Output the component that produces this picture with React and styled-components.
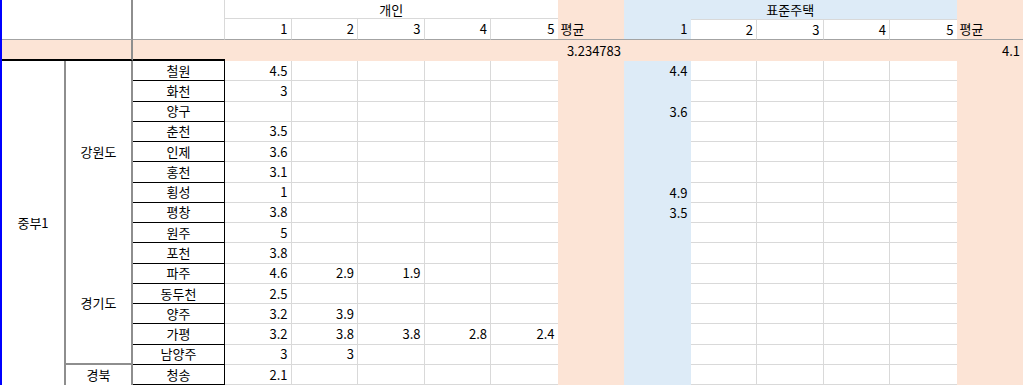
import React from "react";
import styled, { createGlobalStyle } from "styled-components";

const GlobalStyle = createGlobalStyle`
  body {
    margin: 0;
    background: #ffffff;
    overflow: hidden;
    font-family: "Noto Sans CJK KR", "Noto Sans", sans-serif;
  }
`;

const fills = {
  white: "#ffffff",
  peach: "#fce4d6",
  blue: "#ddebf7",
};

const GRID = "1px solid #d9d9d9";
const HEAD = "1px solid #a3a3a3";
const HEAVY = "2px solid #8e8e8e";
const BLACK = "1px solid #000000";

const Sheet = styled.div`
  display: grid;
  grid-template-columns: 64px 67px 92px repeat(12, 66.5px);
  grid-template-rows: 19px 21px 21px repeat(16, 20.27px);
  width: 1024px;
  height: 385px;
  overflow: hidden;
  border-left: 2px solid #0000ff;
  box-sizing: border-box;
  font-size: 13px;
  color: #000000;
`;

const Cell = styled.div`
  box-sizing: border-box;
  display: flex;
  align-items: center;
  justify-content: ${(p) =>
    p.$align === "left" ? "flex-start" : p.$align === "center" ? "center" : "flex-end"};
  padding: 0 3px 1px;
  min-width: 0;
  white-space: nowrap;
  overflow: hidden;
  line-height: 1;
  background: ${(p) => fills[p.$fill || "white"]};
  border-right: ${(p) => p.$r || "none"};
  border-bottom: ${(p) => p.$b || "none"};
  border-top: ${(p) => p.$t || "none"};
  grid-column: span ${(p) => p.$cs || 1};
  grid-row: span ${(p) => p.$rs || 1};
`;

const TitleCell = styled(Cell)`
  align-items: flex-start;
  padding-top: 3px;
`;

const GroupCell = styled(Cell)`
  justify-content: center;
`;

const CityCell = styled(Cell)`
  justify-content: center;
  border-right: ${BLACK};
  border-bottom: ${BLACK};
`;

const rows = [
  ["철원", ["4.5"], ["4.4"]],
  ["화천", ["3"], []],
  ["양구", [], ["3.6"]],
  ["춘천", ["3.5"], []],
  ["인제", ["3.6"], []],
  ["홍천", ["3.1"], []],
  ["횡성", ["1"], ["4.9"]],
  ["평창", ["3.8"], ["3.5"]],
  ["원주", ["5"], []],
  ["포천", ["3.8"], []],
  ["파주", ["4.6", "2.9", "1.9"], []],
  ["동두천", ["2.5"], []],
  ["양주", ["3.2", "3.9"], []],
  ["가평", ["3.2", "3.8", "3.8", "2.8", "2.4"], []],
  ["남양주", ["3", "3"], []],
  ["청송", ["2.1"], []],
];

const provinces = {
  0: { name: "강원도", span: 9 },
  9: { name: "경기도", span: 6, line: true },
  15: { name: "경북", span: 1 },
};

const idx = [0, 1, 2, 3, 4];

function Block({ values, fill }) {
  // 5 value columns; white ones carry gridlines, filled ones hide them
  return idx.map((i) => {
    const isFilled = fill && i === 0;
    return (
      <Cell
        key={i}
        $fill={isFilled ? fill : "white"}
        $r={isFilled || i === 4 ? "none" : GRID}
        $b={isFilled ? "none" : GRID}
      >
        {values[i] || ""}
      </Cell>
    );
  });
}

export default function App() {
  return (
    <>
      <GlobalStyle />
      <Sheet>
        {/* header row 1 */}
        <Cell $cs={2} $rs={2} $r={HEAVY} $b={HEAD} />
        <Cell $rs={2} $r={GRID} $b={HEAD} />
        <TitleCell $cs={5} $align="center" $b={GRID}>
          개인
        </TitleCell>
        <Cell $fill="peach" />
        <TitleCell $cs={5} $align="center" $fill="blue">
          표준주택
        </TitleCell>
        <Cell $fill="peach" />

        {/* header row 2 */}
        {idx.map((i) => (
          <Cell key={"p" + i} $r={i === 4 ? "none" : GRID} $b={HEAD}>
            {i + 1}
          </Cell>
        ))}
        <Cell $fill="peach" $align="left" $b={HEAD}>
          평균
        </Cell>
        {idx.map((i) => (
          <Cell
            key={"h" + i}
            $fill={i === 0 ? "blue" : "white"}
            $r={i === 0 || i === 4 ? "none" : GRID}
            $t={i === 0 ? "none" : GRID}
            $b={HEAD}
          >
            {i + 1}
          </Cell>
        ))}
        <Cell $fill="peach" $align="left" $b={HEAD}>
          평균
        </Cell>

        {/* total row */}
        <Cell $cs={2} $fill="peach" $r={HEAVY} $b="2px solid #000000" />
        <Cell $fill="peach" $b="2px solid #000000" />
        <Cell $cs={5} $fill="peach" />
        <Cell $fill="peach">3.234783</Cell>
        <Cell $cs={5} $fill="peach" />
        <Cell $fill="peach">4.1</Cell>

        {/* data rows */}
        {rows.map(([city, personal, housing], r) => (
          <React.Fragment key={city}>
            {r === 0 && (
              <GroupCell $rs={16} $r={HEAVY}>
                중부1
              </GroupCell>
            )}
            {provinces[r] && (
              <GroupCell
                $rs={provinces[r].span}
                $r={HEAVY}
                $b={provinces[r].line ? HEAVY : "none"}
              >
                {provinces[r].name}
              </GroupCell>
            )}
            <CityCell>{city}</CityCell>
            <Block values={personal} />
            <Cell $fill="peach" />
            <Block values={housing} fill="blue" />
            <Cell $fill="peach" />
          </React.Fragment>
        ))}
      </Sheet>
    </>
  );
}
